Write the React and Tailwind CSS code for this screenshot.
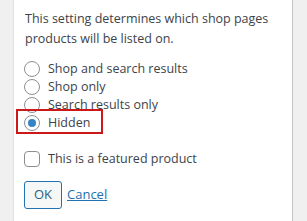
import React, { useState } from 'react';

const options = [
  { id: 'visible', label: 'Shop and search results' },
  { id: 'catalog', label: 'Shop only' },
  { id: 'search', label: 'Search results only' },
  { id: 'hidden', label: 'Hidden' },
];

const Radio = ({ checked }) => (
  <span className="relative flex h-[16px] w-[16px] shrink-0 items-center justify-center rounded-full border border-[#8c8f94] bg-white">
    {checked && <span className="h-[8px] w-[8px] rounded-full bg-[#3582c4]" />}
  </span>
);

export default function App() {
  const [visibility, setVisibility] = useState('hidden');
  const [featured, setFeatured] = useState(false);

  return (
    <div
      className="relative flex h-[221px] w-[307px] overflow-hidden bg-[#f0f0f1] text-[13px] text-[#3c434a]"
      style={{ fontFamily: '"Open Sans", "Noto Sans", sans-serif' }}
    >
      <div className="w-[14px] shrink-0 border-r border-[#e2e2e2]" />
      <div className="w-[279px] shrink-0 border-r border-[#c3c4c7] bg-white pl-[10px] pt-[9px]">
        <p className="pl-[1px] text-[12.5px] leading-[20px]">
          This setting determines which shop pages products will be listed on.
        </p>

        <div className="mt-[11px] flex flex-col">
          {options.map(opt => (
            <label
              key={opt.id}
              className="flex h-[18px] cursor-pointer items-center gap-[8px] text-[12.5px]"
              onClick={() => setVisibility(opt.id)}
            >
              <Radio checked={visibility === opt.id} />
              <span>{opt.label}</span>
            </label>
          ))}
        </div>

        <label
          className="mt-[18px] flex h-[18px] cursor-pointer items-center gap-[8px] text-[12.5px]"
          onClick={() => setFeatured(!featured)}
        >
          <span className="h-[16px] w-[16px] shrink-0 rounded-[4px] border border-[#8c8f94] bg-white" />
          <span>This is a featured product</span>
        </label>

        <div className="mt-[13px] flex items-center gap-[5px]">
          <button className="h-[28px] w-[38px] rounded-[3px] border border-[#2271b1] bg-[#f6f7f7] text-[13px] text-[#2c5f7c]">
            OK
          </button>
          <a href="#" className="text-[13px] text-[#2271b1] underline">
            Cancel
          </a>
        </div>
      </div>
      <div className="flex-1" />

      {/* highlight around the selected option */}
      <div className="pointer-events-none absolute left-[16px] top-[109px] h-[25px] w-[87px] border-2 border-[#cc1818]" />
    </div>
  );
}
